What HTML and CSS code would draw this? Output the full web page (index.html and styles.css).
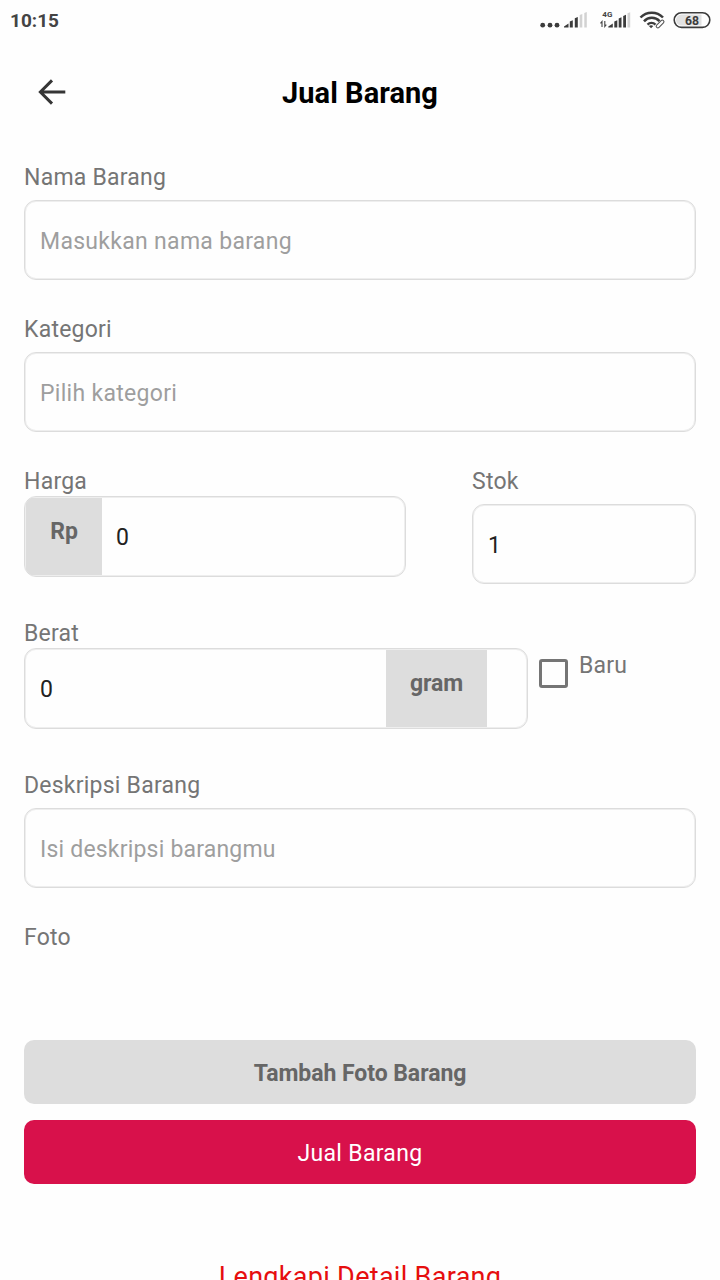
FILE: index.html
```html
<!DOCTYPE html>
<html lang="id">
<head>
<meta charset="utf-8">
<title>Jual Barang</title>
<link rel="stylesheet" href="styles.css">
</head>
<body>
<div class="screen">
  <div class="status">
    <span class="clock">10:15</span>
    <svg class="status-icons" width="180" height="40" viewBox="0 0 180 40">
      <g fill="#3c3c3c">
        <circle cx="2.700" cy="25.200" r="2.400"/><circle cx="10" cy="25.200" r="2.400"/><circle cx="17" cy="25.200" r="2.400"/>
        <path d="M24 27.500v-1l4.500-3v4zM29.800 21.500l3-1.300v7.300h-3zM34.800 18.200l3-1.200v10.500h-3z"/>
        <path d="M68.300 27.500v-1l4.500-3v4zM74.300 21.500l3-1.300v7.300h-3zM78.700 18.500l2.800-1.200v10.200h-2.800zM83.200 16l2.800-1.200v12.700h-2.800z"/>
      </g>
      <path fill="#d2d2d2" d="M39.700 15l2.600-1v13.500h-2.600zM44.300 13l2.500-1v15.500h-2.500zM87.500 13.300l2.700-1v15.200h-2.700z"/>
      <text class="network" x="62.300" y="17">4G</text>
      <path d="M62 27v-5.500l-1.500 1.800M64.800 21v5.500l1.500-1.800" fill="none" stroke="#444" stroke-width="1.100"/>
      <g fill="none" stroke="#3c3c3c" stroke-width="2.500">
        <path d="M100.500 17.500a15.500 15.500 0 0 1 22.500 0M104 21.300a10.500 10.500 0 0 1 15.500-.2M107.500 24.600a6 6 0 0 1 8 0"/>
      </g>
      <path d="M108.900 26q2.200-1.700 4.400 0l-2.200 2.300z" fill="#3c3c3c"/>
      <rect x="115.300" y="22.400" width="9.500" height="3.300" rx="1.600" transform="rotate(-45 120 24)" fill="#fff" stroke="#555" stroke-width="1.100"/>
      <rect x="134.200" y="12.800" width="35.600" height="14.600" rx="7.300" fill="#fff" stroke="#3c3c3c" stroke-width="1.600"/>
      <path d="M136 20.100a5.500 5.500 0 0 1 5.500-5.500h20v11h-20a5.500 5.500 0 0 1-5.500-5.500" fill="#e2e2e2"/>
      <text class="battery" x="152" y="25" textLength="14" lengthAdjust="spacingAndGlyphs">68</text>
    </svg>
  </div>
  <header class="header">
    <svg class="back" width="28" height="28" viewBox="0 0 28 28"><path d="M27.300 14H3M14 2.400L2.400 14L14 25.600" fill="none" stroke="#353535" stroke-width="3"/></svg>
    <h1 class="title">Jual Barang</h1>
  </header>
  <main class="form">
    <div class="field"><div class="label">Nama Barang</div><div class="input hint">Masukkan nama barang</div></div>
    <div class="field"><div class="label">Kategori</div><div class="input hint">Pilih kategori</div></div>
    <div class="row">
      <div class="price"><div class="label tight">Harga</div><div class="input group"><span class="unit unit-rp">Rp</span><span class="value">0</span></div></div>
      <div class="stock"><div class="label">Stok</div><div class="input"><span>1</span></div></div>
    </div>
    <div class="row">
      <div class="weight"><div class="label tight">Berat</div><div class="input group"><span class="amount">0</span><span class="unit unit-gram">gram</span></div></div>
      <div class="condition"><span class="checkbox"></span><span class="condition-label">Baru</span></div>
    </div>
    <div class="field"><div class="label">Deskripsi Barang</div><div class="input hint description">Isi deskripsi barangmu</div></div>
    <div class="photo"><div class="label">Foto</div></div>
    <div class="button add">Tambah Foto Barang</div>
    <div class="button sell">Jual Barang</div>
    <p class="notice">Lengkapi Detail Barang</p>
  </main>
</div>
</body>
</html>
```
FILE: styles.css
```css
* { box-sizing: border-box; }
body { margin: 0; background: #fefefe; font-family: Roboto, sans-serif; }
.screen { width: 720px; height: 1280px; overflow: hidden; font-size: 23px; letter-spacing: 0.23px; color: #757575; }
.status { height: 40px; display: flex; justify-content: space-between; padding-left: 10px; }
.clock { font-size: 19px; font-weight: 700; line-height: 41px; color: #444; letter-spacing: 0; }
.network { font-size: 8px; font-weight: 700; fill: #444; letter-spacing: 0; }
.battery { font-size: 13.5px; font-weight: 700; fill: #3c3c3c; text-anchor: middle; letter-spacing: 0; }
.header { height: 120px; padding: 38px 38px 0; display: grid; grid-template-columns: 28px 1fr 28px; align-items: start; }
.title { margin: -3px 0 0; font-size: 29px; line-height: 36px; font-weight: 700; text-align: center; color: #000; letter-spacing: 0.05px; }
.form { padding: 0 24px; }
.field { height: 152px; }
.label { height: 40px; line-height: 36px; }
.label.tight { height: 32px; }
.input { height: 80px; border: 1px solid #dcdcdc; box-shadow: inset 0 0 0 1px #eee; border-radius: 12px; padding: 1px 15px; line-height: 79px; color: #212121; display: flex; }
.input.hint { color: #9e9e9e; letter-spacing: 0.3px; }
.input.description { letter-spacing: 0.2px; }
.input.group { height: 81px; padding: 1px; overflow: hidden; }
.row { height: 152px; display: flex; }
.price { width: 382px; margin-right: 66px; }
.stock { flex: 1; }
.weight { width: 504px; }
.unit { background: #ddd; color: #666; font-weight: 700; line-height: 68px; text-align: center; letter-spacing: -0.05px; }
.unit-rp { width: 76px; border-radius: 3px 0 0 3px; }
.unit-gram { width: 101px; }
.value { padding-left: 14px; }
.amount { width: 360px; padding-left: 14px; }
.condition { display: flex; padding: 43px 0 0 11px; align-items: flex-start; }
.checkbox { width: 29px; height: 29px; border: 3px solid #757575; border-radius: 3px; margin-right: 11px; }
.condition-label { line-height: 32px; margin-top: -9px; }
.photo { height: 120px; }
.button { height: 64px; border-radius: 10px; line-height: 67px; text-align: center; }
.add { background: #ddd; color: #666; font-weight: 700; letter-spacing: -0.05px; margin-bottom: 16px; }
.sell { background: #d8114b; color: #fff; letter-spacing: 0.3px; }
.notice { margin: 75px 0 0; font-size: 27px; line-height: 36px; text-align: center; color: #e60e0e; letter-spacing: 0.3px; }
```
